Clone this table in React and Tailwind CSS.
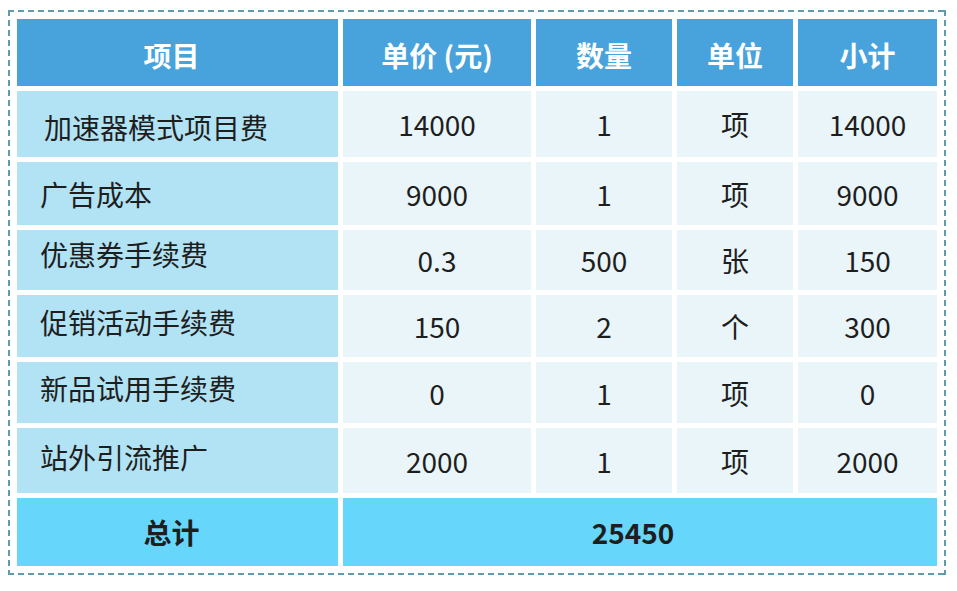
import React from "react";

const rows = [
  { name: "加速器模式项目费", price: "14000", qty: "1", unit: "项", sub: "14000", h: "h-[66px]", adj: "pl-[27px] pt-[5px]" },
  { name: "广告成本", price: "9000", qty: "1", unit: "项", sub: "9000", h: "h-[63px]", adj: "pl-[23px]" },
  { name: "优惠券手续费", price: "0.3", qty: "500", unit: "张", sub: "150", h: "h-[60px]", adj: "pl-[23px] pb-[13px]" },
  { name: "促销活动手续费", price: "150", qty: "2", unit: "个", sub: "300", h: "h-[62px]", adj: "pl-[23px] pb-[8px]" },
  { name: "新品试用手续费", price: "0", qty: "1", unit: "项", sub: "0", h: "h-[61px]", adj: "pl-[23px] pb-[9px]" },
  { name: "站外引流推广", price: "2000", qty: "1", unit: "项", sub: "2000", h: "h-[65px]", adj: "pl-[23px] pb-[7px]" },
];

const font = "font-['Noto_Sans_CJK_SC','Noto_Sans',sans-serif]";

export default function App() {
  return (
    <div className={`w-[957px] h-[591px] bg-white ${font} text-[28px] leading-none text-[#1e1e1e]`}>
      <div className="ml-[8px] mt-[10px] w-[938px] p-[9px] [background:linear-gradient(90deg,#5e9cad_6px,transparent_6px)_top_left/10px_2px_repeat-x,linear-gradient(90deg,#5e9cad_6px,transparent_6px)_bottom_left/10px_2px_repeat-x,linear-gradient(180deg,#5e9cad_6px,transparent_6px)_top_left/2px_10px_repeat-y,linear-gradient(180deg,#5e9cad_6px,transparent_6px)_top_right/2px_10px_repeat-y]">
        <div className="grid grid-cols-[321px_188px_136px_116px_139px] gap-[5px]">
          {/* header */}
          <div className="h-[67px] bg-[#48a3dc] text-white font-bold flex items-center justify-center pr-[12px] pt-[4px]">项目</div>
          <div className="h-[67px] bg-[#48a3dc] text-white font-bold flex items-center justify-center pt-[4px]">单价 (元)</div>
          <div className="h-[67px] bg-[#48a3dc] text-white font-bold flex items-center justify-center pt-[4px]">数量</div>
          <div className="h-[67px] bg-[#48a3dc] text-white font-bold flex items-center justify-center pt-[4px]">单位</div>
          <div className="h-[67px] bg-[#48a3dc] text-white font-bold flex items-center justify-center pt-[4px]">小计</div>

          {rows.map((r) => (
            <React.Fragment key={r.name}>
              <div className={`${r.h} bg-[#b2e3f4] flex items-center ${r.adj}`}>{r.name}</div>
              <div className={`${r.h} bg-[#e9f5f8] flex items-center justify-center`}>{r.price}</div>
              <div className={`${r.h} bg-[#e9f5f8] flex items-center justify-center`}>{r.qty}</div>
              <div className={`${r.h} bg-[#e9f5f8] flex items-center justify-center`}>{r.unit}</div>
              <div className={`${r.h} bg-[#e9f5f8] flex items-center justify-center`}>{r.sub}</div>
            </React.Fragment>
          ))}

          {/* total */}
          <div className="h-[68px] bg-[#66d7fb] font-bold flex items-center justify-center pr-[12px]">总计</div>
          <div className="col-span-4 h-[68px] bg-[#66d7fb] font-bold flex items-center justify-center pr-[14px]">25450</div>
        </div>
      </div>
    </div>
  );
}
